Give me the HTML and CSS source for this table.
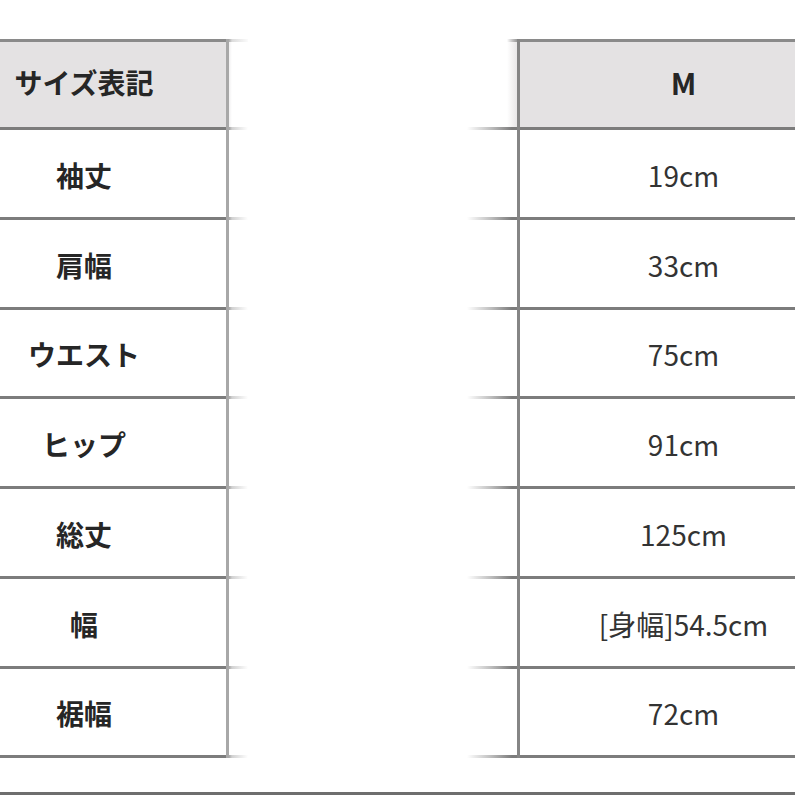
FILE: index.html
```html
<!DOCTYPE html>
<html lang="ja">
<head>
<meta charset="utf-8">
<title>サイズ表</title>
<link rel="stylesheet" href="styles.css">
</head>
<body>
<div class="page">
  <div class="tables">
    <div class="col col-left">
      <div class="row head"><div class="cell">サイズ表記</div><div class="tail"></div></div>
      <div class="row"><div class="cell">袖丈</div><div class="tail"></div></div>
      <div class="row"><div class="cell">肩幅</div><div class="tail"></div></div>
      <div class="row"><div class="cell">ウエスト</div><div class="tail"></div></div>
      <div class="row"><div class="cell">ヒップ</div><div class="tail"></div></div>
      <div class="row"><div class="cell">総丈</div><div class="tail"></div></div>
      <div class="row"><div class="cell">幅</div><div class="tail"></div></div>
      <div class="row"><div class="cell">裾幅</div><div class="tail"></div></div>
    </div>
    <div class="col col-right">
      <div class="row head"><div class="tail"></div><div class="cell">M</div></div>
      <div class="row"><div class="tail"></div><div class="cell">19cm</div></div>
      <div class="row"><div class="tail"></div><div class="cell">33cm</div></div>
      <div class="row"><div class="tail"></div><div class="cell">75cm</div></div>
      <div class="row"><div class="tail"></div><div class="cell">91cm</div></div>
      <div class="row"><div class="tail"></div><div class="cell">125cm</div></div>
      <div class="row"><div class="tail"></div><div class="cell">[身幅]54.5cm</div></div>
      <div class="row"><div class="tail"></div><div class="cell">72cm</div></div>
    </div>
  </div>
  <div class="bottom-line"></div>
</div>
</body>
</html>
```

FILE: styles.css
```css
html, body {
  margin: 0;
  padding: 0;
  background: #ffffff;
}

body {
  width: 795px;
  height: 795px;
  overflow: hidden;
  font-family: "Noto Sans CJK JP", "Noto Sans", sans-serif;
  color: #2b2b2b;
}

.page {
  display: flex;
  flex-direction: column;
  height: 795px;
  padding-top: 39px;
  box-sizing: border-box;
}

.tables {
  display: flex;
  justify-content: space-between;
}

.col {
  display: flex;
  flex-direction: column;
}

.row {
  display: flex;
  height: 89.75px;
  box-sizing: border-box;
  background-repeat: no-repeat;
  background-position: left bottom;
  background-size: 100% 3px;
}

.row.head {
  height: 91px;
}

.col-left {
  width: 248px;
}

.col-left .row {
  background-image: linear-gradient(to right, #7c7c7c 0, #7c7c7c 226px, rgba(124,124,124,0.35) 232px, rgba(124,124,124,0) 248px);
}

.col-left .cell {
  width: 229px;
  box-sizing: border-box;
  padding-right: 58px;
  border-right: 3px solid #a8a8a8;
  display: flex;
  align-items: center;
  justify-content: center;
  font-weight: 700;
  font-size: 28px;
  color: #262626;
}

.col-left .tail {
  flex: 1;
}

.col-left .head {
  background-image:
    linear-gradient(to right, #8a8a8a 0, #8a8a8a 226px, rgba(138,138,138,0.3) 232px, rgba(138,138,138,0) 250px),
    linear-gradient(to right, #7c7c7c 0, #7c7c7c 226px, rgba(124,124,124,0.35) 232px, rgba(124,124,124,0) 248px),
    linear-gradient(to right, #e4e2e3 0, #e4e2e3 226px, rgba(228,226,227,0) 232px);
  background-size: 100% 3px, 100% 3px, 100% 100%;
  background-position: left top, left bottom, left top;
}

.head .cell {
  padding-bottom: 5px;
}

.col-right {
  width: 328px;
}

.col-right .row {
  background-image: linear-gradient(to right, rgba(124,124,124,0) 0, rgba(124,124,124,0.45) 22px, #7c7c7c 45px, #7c7c7c 100%);
}

.col-right .tail {
  width: 50px;
}

.col-right .cell {
  flex: 1;
  box-sizing: border-box;
  padding-left: 52px;
  border-left: 3px solid #858585;
  display: flex;
  align-items: center;
  justify-content: center;
  font-size: 28px;
  color: #333333;
}

.col-right .head {
  background-image:
    linear-gradient(to right, rgba(138,138,138,0) 0, rgba(138,138,138,0) 40px, #8a8a8a 52px, #8a8a8a 100%),
    linear-gradient(to right, rgba(124,124,124,0) 0, rgba(124,124,124,0.45) 22px, #7c7c7c 45px, #7c7c7c 100%),
    linear-gradient(to right, rgba(228,226,227,0) 0, rgba(228,226,227,0) 40px, #e4e2e3 52px, #e4e2e3 100%);
  background-size: 100% 3px, 100% 3px, 100% 100%;
  background-position: left top, left bottom, left top;
}

.col-right .head .cell {
  font-weight: 700;
  font-size: 30px;
  color: #262626;
}

.bottom-line {
  margin-top: auto;
  height: 3px;
  background: #6e6e6e;
}
```
